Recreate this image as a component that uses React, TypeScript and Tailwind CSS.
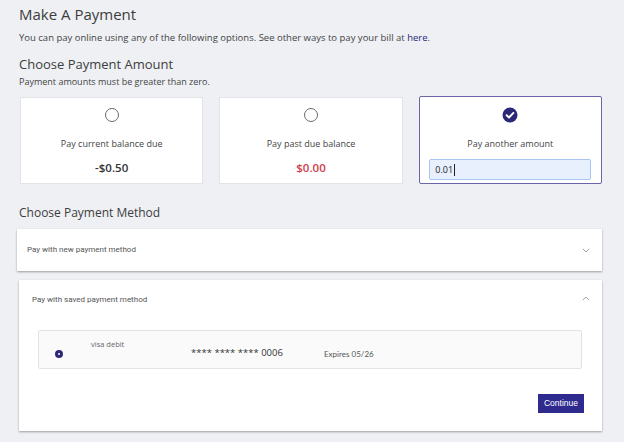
import React from "react";

function Radio() {
  return <div className="w-[14px] h-[14px] rounded-full border-[1.5px] border-[#6b6b6b] bg-white" />;
}

function Check() {
  return (
    <svg width="16" height="16" viewBox="0 0 16 16">
      <circle cx="8" cy="8" r="7.5" fill="#2b2878" />
      <path d="M4.6 8.2 L7 10.5 L11.4 5.9" stroke="white" strokeWidth="1.9" fill="none" strokeLinecap="round" strokeLinejoin="round" />
    </svg>
  );
}

function Chevron({ up }: { up?: boolean }) {
  return (
    <svg width="8" height="5" viewBox="0 0 8 5" className={up ? "rotate-180" : ""}>
      <path d="M0.8 0.8 L4 4 L7.2 0.8" stroke="#9a9a9a" strokeWidth="0.9" fill="none" />
    </svg>
  );
}

export default function App() {
  return (
    <div className="w-[624px] h-[442px] overflow-hidden bg-[#eef0f4] pl-[19px] pr-[22px] font-['Open_Sans',sans-serif] text-[#444]">
      <h1 className="pt-[4px] text-[15px] leading-[20px] text-[#3d3d3d]">Make A Payment</h1>
      <p className="mt-[7px] text-[9.5px] leading-[13px] text-[#444]">
        You can pay online using any of the following options. See other ways to pay your bill at{" "}
        <span className="text-[#2b2878]">here</span>.
      </p>
      <h2 className="mt-[12px] text-[13px] leading-[17px] text-[#3d3d3d]">Choose Payment Amount</h2>
      <p className="mt-[3px] text-[9px] leading-[12px] text-[#444]">Payment amounts must be greater than zero.</p>

      <div className="mt-[9px] ml-[1px] grid grid-cols-3 gap-[16px] h-[86px]">
        <div className="bg-white border border-[#e2e4e8] flex flex-col items-center">
          <div className="mt-[10px]"><Radio /></div>
          <div className="mt-[16px] text-[9px] leading-[12px] text-[#444]">Pay current balance due</div>
          <div className="mt-[11px] text-[11.5px] leading-[14px] font-semibold text-[#333]">-$0.50</div>
        </div>
        <div className="bg-white border border-[#e2e4e8] flex flex-col items-center">
          <div className="mt-[10px]"><Radio /></div>
          <div className="mt-[16px] text-[9px] leading-[12px] text-[#444]">Pay past due balance</div>
          <div className="mt-[11px] text-[11.5px] leading-[14px] font-semibold text-[#d0404a]">$0.00</div>
        </div>
        <div className="bg-white border border-[#6a64a8] rounded-[2px] flex flex-col items-center -mt-[1px] h-[88px]">
          <div className="mt-[10px]"><Check /></div>
          <div className="mt-[15px] text-[9px] leading-[12px] text-[#444]">Pay another amount</div>
          <div className="mt-[9px] w-[162px] h-[21px] bg-[#e8f0fe] border-[1.5px] border-[#a9c6f2] rounded-[2px] flex items-center pl-[5px] text-[9px] text-[#222]">
            0.01<span className="inline-block w-[1px] h-[12px] bg-[#222] ml-[1px]" />
          </div>
        </div>
      </div>

      <h2 className="mt-[22px] text-[12px] leading-[16px] text-[#3d3d3d]">Choose Payment Method</h2>

      <div className="mt-[8px] -ml-[2px] h-[42px] bg-white shadow-[0_1px_2px_rgba(0,0,0,0.35)] flex items-center justify-between pl-[10px] pr-[12px] font-['Roboto',sans-serif]">
        <span className="text-[8px] text-[#555]">Pay with new payment method</span>
        <Chevron />
      </div>

      <div className="mt-[9px] h-[151px] bg-white shadow-[0_1px_2px_rgba(0,0,0,0.35)] flex flex-col pl-[13px] pr-[12px]">
        <div className="h-[40px] flex items-center justify-between font-['Roboto',sans-serif]">
          <span className="text-[8px] text-[#555]">Pay with saved payment method</span>
          <span className="-mt-[4px]"><Chevron up /></span>
        </div>
        <div className="mt-[10px] ml-[6px] mr-[8px] h-[39px] bg-[#fafafa] border border-[#e3e3e3] rounded-[2px] flex items-center">
          <div className="ml-[16px] mt-[8px] w-[8px] h-[8px] rounded-full border-[3px] border-[#2b2878] bg-white" />
          <div className="ml-[28px] self-start mt-[8px] text-[7.5px] text-[#666] w-[100px]">visa debit</div>
          <div className="mt-[8px] text-[9.5px] text-[#333] w-[133px]">**** **** **** 0006</div>
          <div className="mt-[8px] text-[8px] text-[#555] font-['Lato',sans-serif]">Expires 05/26</div>
        </div>
        <div className="flex justify-end mt-[25px] mr-[6px]">
          <button className="w-[46px] h-[19px] bg-[#2e2a8e] text-white text-[8.5px] font-['Liberation_Sans',sans-serif]">Continue</button>
        </div>
      </div>
    </div>
  );
}
